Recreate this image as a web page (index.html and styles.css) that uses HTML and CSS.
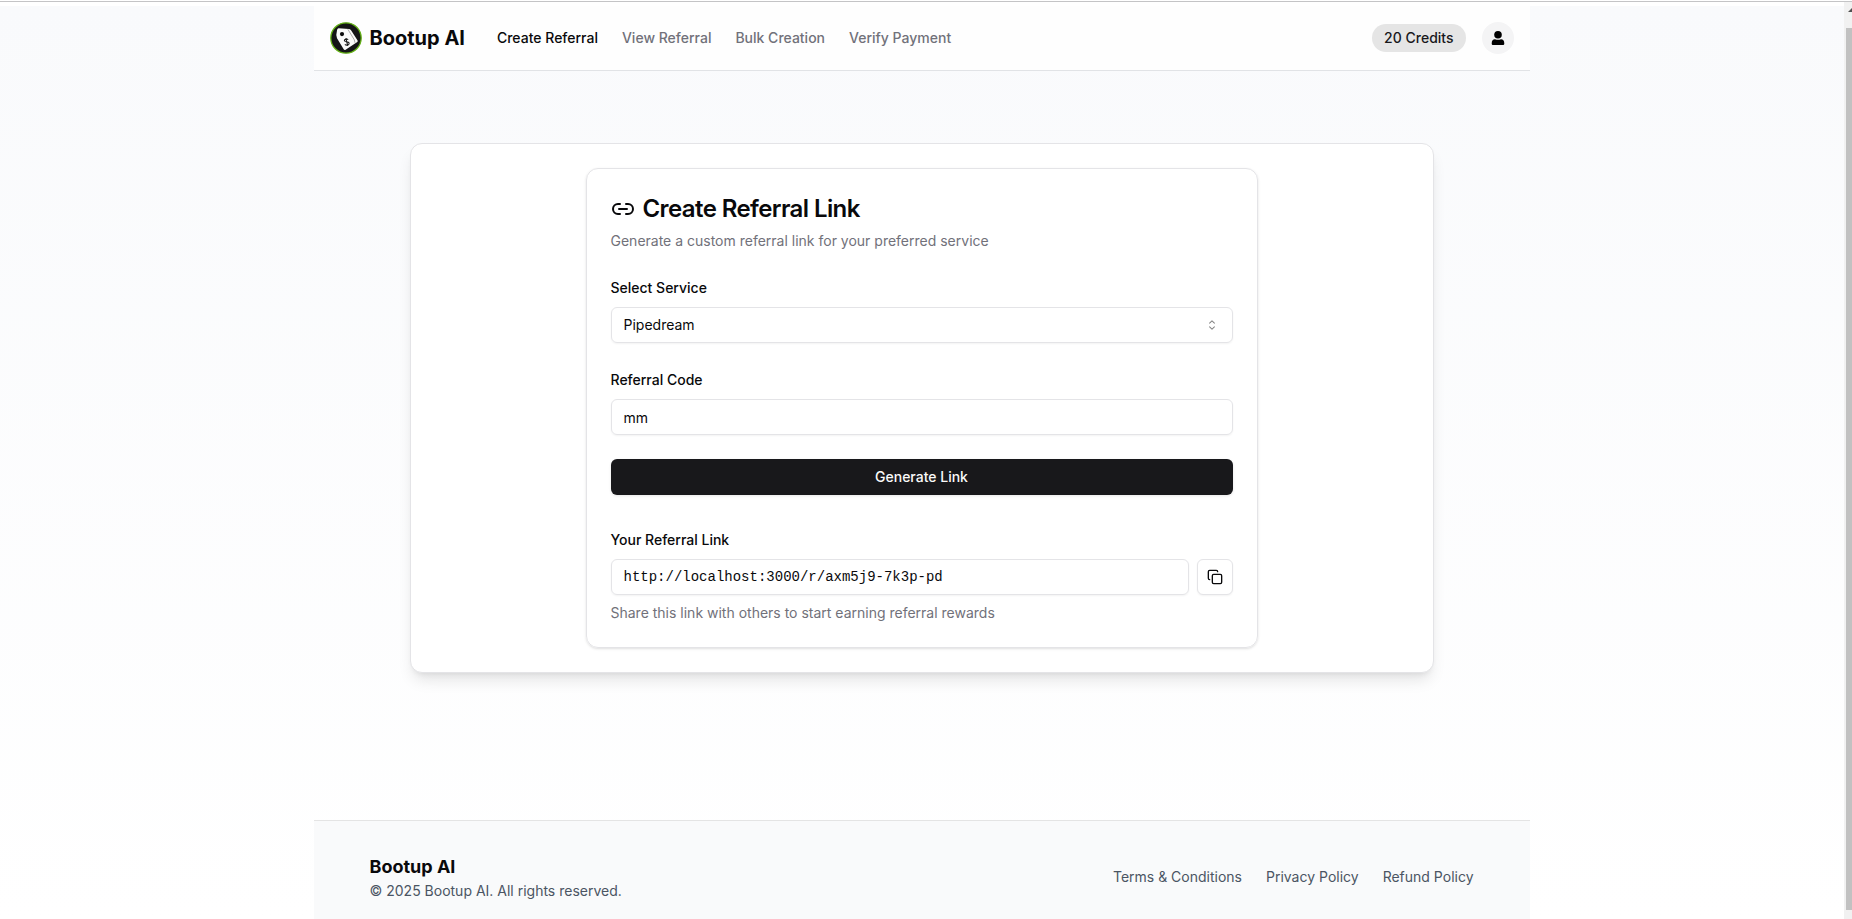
FILE: index.html
```html
<!DOCTYPE html>
<html lang="en">
<head>
<meta charset="utf-8">
<title>Bootup AI</title>
<link rel="stylesheet" href="styles.css">
</head>
<body>
<div class="window">
  <div class="page">
    <header class="header">
      <svg class="logo" viewBox="0 0 32 32">
        <circle cx="16" cy="16" r="15.2" fill="#141416" stroke="#62b015" stroke-width="1.3"/>
        <path d="M8.600 6.200l10.600.8q1.300.3 2 1.400l6.400 10q.4.900-.3 1.600L15.600 27.700q-1.200.7-1.900-.5L7 16.200 6.300 13l.8-5.300q.4-1.400 1.500-1.500z" fill="#fafafa"/>
        <path d="M17.800 7.200l6.500 10.600.7 3" fill="none" stroke="#8a8a8a" stroke-width=".7"/>
        <circle cx="12" cy="12.100" r="2.100" fill="#0b0b0c"/>
        <path d="M18.200 17.600c-1.400-1.300-4.300-.3-3.700 1.300.6 1.500 3.900.5 4.600 2.100.6 1.700-2.500 2.900-4.200 1.400M15.800 16.200l2 7.600" fill="none" stroke="#1a1a1a" stroke-width="1.1"/>
      </svg>
      <span class="brand">Bootup AI</span>
      <nav class="nav">
        <a class="active">Create Referral</a><a>View Referral</a><a>Bulk Creation</a><a>Verify Payment</a>
      </nav>
      <span class="credits">20 Credits</span>
      <span class="avatar">
        <svg width="14" height="16" viewBox="0 0 14 16"><circle cx="7" cy="4.7" r="3.8"/><path d="M.7 13.4C.7 10.700 2 9.300 4 9.300q3 1 6 0c2 0 3.300 1.400 3.300 4.100 0 1-.6 1.600-1.600 1.600H2.300C1.300 15 .7 14.400.7 13.400z"/></svg>
      </span>
    </header>
    <main class="main">
      <section class="panel">
        <div class="card">
          <h1 class="title">
            <svg class="icon" width="24" height="24" viewBox="0 0 24 24"><path d="M9 17H7A5 5 0 0 1 7 7h2M15 7h2a5 5 0 1 1 0 10h-2M8 12h8"/></svg>
            Create Referral Link
          </h1>
          <p class="muted desc">Generate a custom referral link for your preferred service</p>
          <div class="group">
            <label class="label">Select Service</label>
            <div class="field select"><span>Pipedream</span>
              <svg class="caret" width="16" height="16" viewBox="0 0 15 15"><path d="M4.932 5.432a.45.45 0 0 0 .636.636L7.500 4.136l1.932 1.932a.45.45 0 0 0 .636-.636l-2.250-2.250a.45.45 0 0 0-.636 0zM10.068 9.568a.45.45 0 0 0-.636-.636L7.500 10.864 5.568 8.932a.45.45 0 0 0-.636.636l2.250 2.250a.45.45 0 0 0 .636 0z"/></svg>
            </div>
          </div>
          <div class="group">
            <label class="label">Referral Code</label>
            <div class="field code">mm</div>
          </div>
          <button class="submit">Generate Link</button>
          <div class="group result">
            <label class="label">Your Referral Link</label>
            <div class="row">
              <div class="field mono">http://localhost:3000/r/axm5j9-7k3p-pd</div>
              <button class="copy"><svg class="icon" width="16" height="16" viewBox="0 0 24 24"><rect x="8" y="8" width="14" height="14" rx="2"/><path d="M4 16c-1.100 0-2-.9-2-2V4c0-1.100.9-2 2-2h10c1.100 0 2 .9 2 2"/></svg></button>
            </div>
            <p class="muted">Share this link with others to start earning referral rewards</p>
          </div>
        </div>
      </section>
    </main>
    <footer class="footer">
      <div>
        <div class="footer-brand">Bootup AI</div>
        <div class="copyright">© 2025 Bootup AI. All rights reserved.</div>
      </div>
      <nav class="links"><a>Terms &amp; Conditions</a><a>Privacy Policy</a><a>Refund Policy</a></nav>
    </footer>
  </div>
  <div class="scrollbar">
    <svg class="arrow" width="8" height="26" viewBox="0 0 8 26"><path d="M4 10h4V6z" fill="#505050"/></svg>
    <div class="thumb"></div>
  </div>
</div>
</body>
</html>
```
FILE: styles.css
```css
* { box-sizing: border-box; margin: 0; }
body {
  height: 919px;
  overflow: hidden;
  background: #fff;
  color: #09090b;
  font: 14px/20px Inter, "Liberation Sans", sans-serif;
}
.window {
  display: flex;
  height: 918px;
  margin-top: 1px;
  border-top: 1px solid #c4c4c6;
}
.page {
  flex: 1;
  margin-top: 4px;
  padding-right: 1px;
  display: flex;
  flex-direction: column;
  align-items: center;
  background: linear-gradient(to bottom, #f9fafc, #fff);
}
.header {
  flex: none;
  display: flex;
  align-items: center;
  width: 1216px;
  height: 65px;
  padding: 0 16px;
  background: #fefefe;
  border-bottom: 1px solid #e1e3e6;
}
.logo { width: 32px; height: 32px; }
.brand { margin-left: 8px; font-size: 20px; line-height: 28px; font-weight: 700; }
.nav { display: flex; gap: 24px; margin-left: 32px; color: #71717a; font-weight: 500; }
.nav .active { color: #09090b; }
.credits {
  margin-left: auto;
  padding: 4px 12px;
  border-radius: 14px;
  background: #e5e5e5;
  color: #18181b;
  font-weight: 500;
}
.avatar {
  display: flex;
  align-items: center;
  justify-content: center;
  width: 32px;
  height: 32px;
  margin-left: 16px;
  border-radius: 50%;
  background: #f4f4f5;
}
.main { flex: none; height: 749px; padding-top: 72px; }
.panel {
  width: 1024px;
  padding: 24px;
  background: #fff;
  border: 1px solid #e4e4e7;
  border-radius: 12px;
  box-shadow: 0 10px 15px -3px rgba(0,0,0,.1), 0 4px 6px -4px rgba(0,0,0,.1);
}
.card {
  width: 672px;
  margin: 0 auto;
  padding: 24px;
  border: 1px solid #e4e4e7;
  border-radius: 12px;
  box-shadow: 0 1px 3px rgba(0,0,0,.1), 0 1px 2px -1px rgba(0,0,0,.1);
}
.title {
  display: flex;
  align-items: center;
  gap: 8px;
  font-size: 24px;
  line-height: 32px;
  font-weight: 600;
  letter-spacing: -.6px;
}
.icon { fill: none; stroke: currentColor; stroke-width: 2; stroke-linecap: round; stroke-linejoin: round; }
.muted { color: #71717a; }
.desc { margin-top: 6px; }
.group { display: flex; flex-direction: column; gap: 8px; margin-top: 24px; }
.result { margin-top: 32px; }
.label { font-weight: 500; line-height: 24px; padding-top: 1px; height: 24px; }
.field {
  flex: 1;
  height: 36px;
  padding: 7px 12px;
  border: 1px solid #e4e4e7;
  border-radius: 6px;
  box-shadow: 0 1px 2px rgba(0,0,0,.05);
}
.group > .field { flex: none; }
.code { padding-top: 8px; }
.select { display: flex; align-items: center; justify-content: space-between; }
.caret { opacity: .5; }
.mono { font-family: "Liberation Mono", monospace; }
.submit {
  display: block;
  width: 100%;
  height: 36px;
  margin-top: 24px;
  border: 0;
  border-radius: 6px;
  background: #18181b;
  color: #fafafa;
  font: inherit;
  font-weight: 500;
  box-shadow: 0 1px 3px rgba(0,0,0,.1);
}
.row { display: flex; gap: 8px; }
.copy {
  display: flex;
  align-items: center;
  justify-content: center;
  width: 36px;
  height: 36px;
  padding: 0;
  border: 1px solid #e4e4e7;
  border-radius: 6px;
  background: #fff;
  color: #09090b;
  box-shadow: 0 1px 2px rgba(0,0,0,.05);
}
.footer {
  flex: 1;
  display: flex;
  align-items: flex-start;
  justify-content: space-between;
  width: 1216px;
  padding: 32px 56px 0;
  border-top: 1px solid #e4e4e4;
  background: #f9fafb;
}
.footer-brand { font-size: 18px; line-height: 28px; font-weight: 700; }
.copyright, .links { color: #4b5563; }
.links { display: flex; gap: 24px; margin-top: 14px; }
.scrollbar { width: 8px; background: #f1f1f1; }
.arrow { display: block; }
.thumb { height: 882px; margin-left: 2px; background: #c1c1c1; }
```
